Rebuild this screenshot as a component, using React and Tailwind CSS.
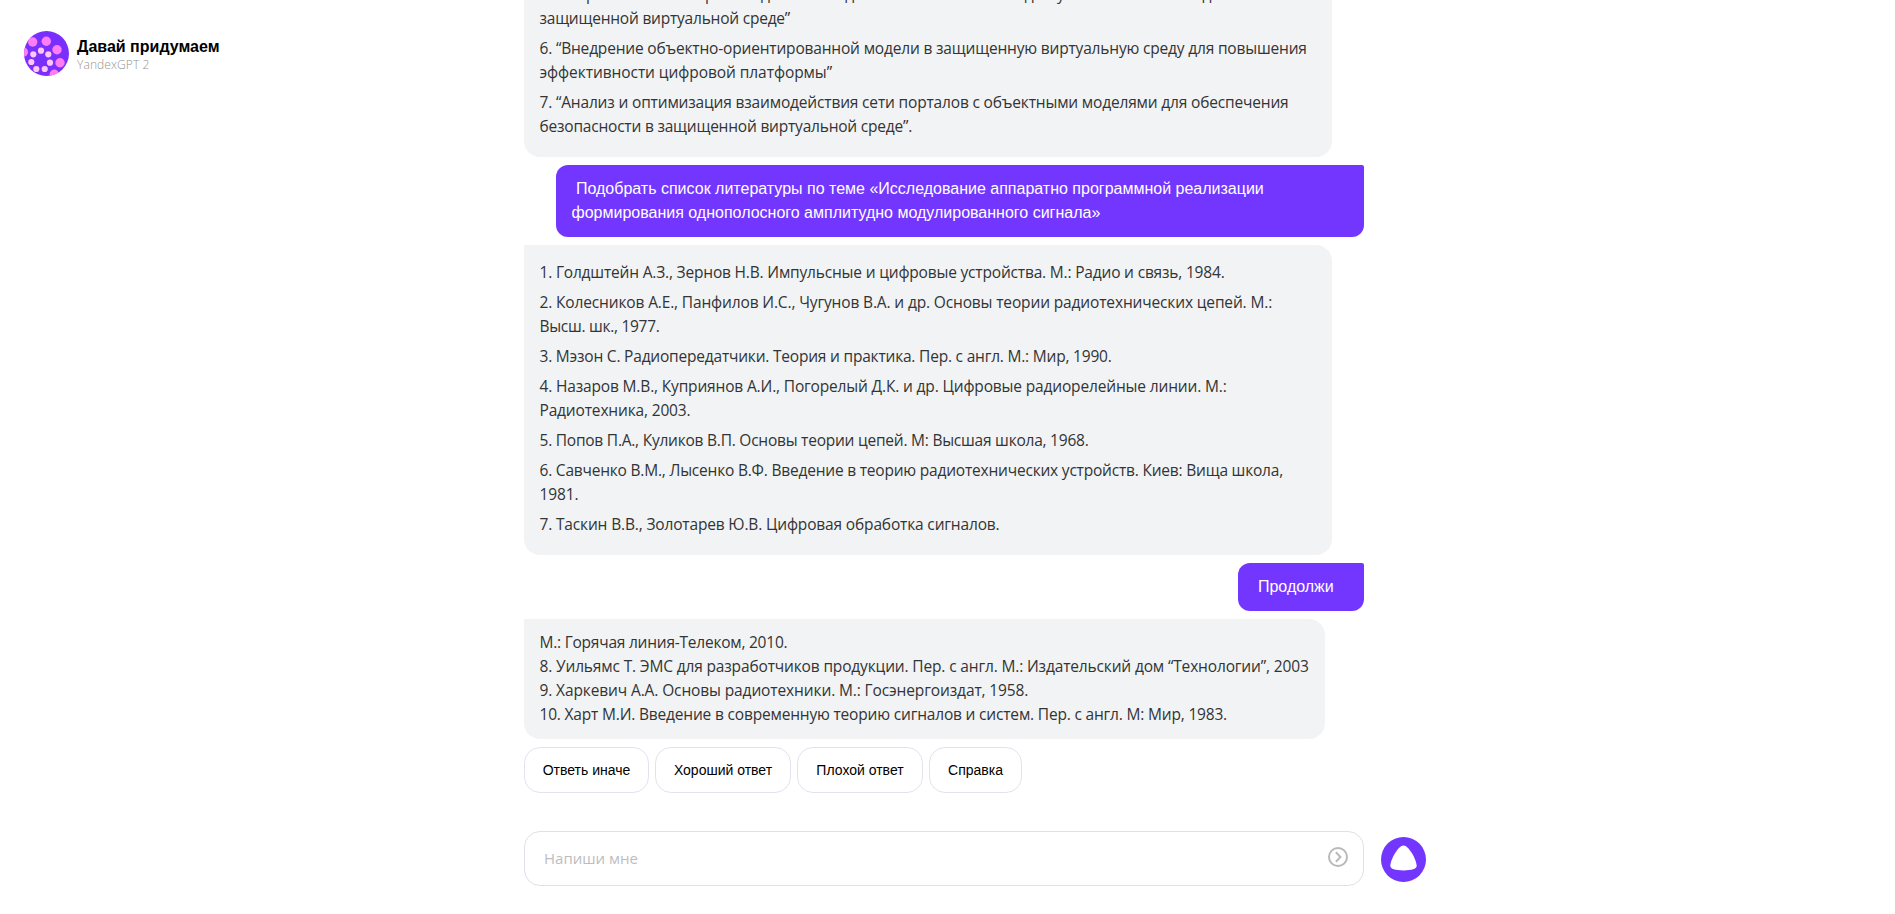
const BIG_DOTS = [
  [8.7, 11],
  [22.3, 10.3],
  [33, 18.7],
  [36, 31.7],
  [30.3, 43.3],
  [-0.6, 21],
];

const SMALL_DOTS = [
  [17, 19.7],
  [24.3, 23.3],
  [26, 31.7],
  [20.7, 38],
  [12.3, 38],
  [7.3, 31],
  [9.3, 23.3],
];

const TOPICS = [
  [
    ["5. “Разработка мониторинга адаптивной динамической системы доступа пользователей для сети в", "tracking-[-0.18px]"],
    ["защищенной виртуальной среде”", "tracking-[-0.22px]"],
  ],
  [
    ["6. “Внедрение объектно-ориентированной модели в защищенную виртуальную среду для повышения", "tracking-[-0.18px]"],
    ["эффективности цифровой платформы”", "tracking-[-0.07px]"],
  ],
  [
    ["7. “Анализ и оптимизация взаимодействия сети порталов с объектными моделями для обеспечения", "tracking-[-0.17px]"],
    ["безопасности в защищенной виртуальной среде”.", "tracking-[-0.21px]"],
  ],
];

const BOOKS = [
  [["1. Голдштейн А.З., Зернов Н.В. Импульсные и цифровые устройства. М.: Радио и связь, 1984.", "tracking-[-0.184px]"]],
  [
    ["2. Колесников А.Е., Панфилов И.С., Чугунов В.А. и др. Основы теории радиотехнических цепей. М.:", "tracking-[-0.145px]"],
    ["Высш. шк., 1977.", "tracking-[-0.29px]"],
  ],
  [["3. Мэзон С. Радиопередатчики. Теория и практика. Пер. с англ. М.: Мир, 1990.", "tracking-[-0.205px]"]],
  [
    ["4. Назаров М.В., Куприянов А.И., Погорелый Д.К. и др. Цифровые радиорелейные линии. М.:", "tracking-[-0.16px]"],
    ["Радиотехника, 2003.", "tracking-[-0.16px]"],
  ],
  [["5. Попов П.А., Куликов В.П. Основы теории цепей. М: Высшая школа, 1968.", "tracking-[-0.234px]"]],
  [
    ["6. Савченко В.М., Лысенко В.Ф. Введение в теорию радиотехнических устройств. Киев: Вища школа,", "tracking-[-0.205px]"],
    ["1981.", "tracking-[-0.1px]"],
  ],
  [["7. Таскин В.В., Золотарев Ю.В. Цифровая обработка сигналов.", "tracking-[-0.16px]"]],
];

const MORE_BOOKS = [
  [
    ["М.: Горячая линия-Телеком, 2010.", "tracking-[-0.23px]"],
    ["8. Уильямс Т. ЭМС для разработчиков продукции. Пер. с англ. М.: Издательский дом “Технологии”, 2003", "tracking-[-0.152px]"],
    ["9. Харкевич А.А. Основы радиотехники. М.: Госэнергоиздат, 1958.", "tracking-[-0.12px]"],
    ["10. Харт М.И. Введение в современную теорию сигналов и систем. Пер. с англ. М: Мир, 1983.", "tracking-[-0.184px]"],
  ],
];

const ACTIONS = [
  ["Ответь иначе", "w-[125px]"],
  ["Хороший ответ", "w-[136px]"],
  ["Плохой ответ", "w-[126px]"],
  ["Справка", "w-[93px]"],
];

function Avatar() {
  return (
    <svg className="size-[45px] shrink-0" viewBox="0 0 45 45">
      <defs>
        <clipPath id="avatar-clip">
          <circle cx="22.5" cy="22.5" r="22.5" />
        </clipPath>
      </defs>
      <g clipPath="url(#avatar-clip)">
        <rect width="45" height="45" fill="#7a30fc" />
        {BIG_DOTS.map(([x, y]) => (
          <circle key={`${x}-${y}`} cx={x} cy={y} r="4.7" fill="#ff7df4" />
        ))}
        {SMALL_DOTS.map(([x, y]) => (
          <circle key={`${x}-${y}`} cx={x} cy={y} r="3.1" fill="#ffc4f8" />
        ))}
      </g>
    </svg>
  );
}

function BotMessage({ items, className }) {
  return (
    <div
      className={`flex shrink-0 flex-col gap-1.5 rounded-2xl rounded-tl-none bg-[#f1f3f5] px-[15.5px] font-['Open_Sans',sans-serif] text-[15.5px] leading-6 text-[#333436] ${className}`}
    >
      {items.map((lines) => (
        <div key={lines[0][0]}>
          {lines.map(([text, tracking]) => (
            <p key={text} className={`whitespace-nowrap ${tracking}`}>
              {text}
            </p>
          ))}
        </div>
      ))}
    </div>
  );
}

function UserMessage({ children, className }) {
  return (
    <div
      className={`shrink-0 self-end whitespace-pre-wrap rounded-xl rounded-tr-[2px] bg-[#7336ff] px-[15.5px] py-3 text-base leading-6 text-white ${className}`}
    >
      {children}
    </div>
  );
}

export default function App() {
  return (
    <div className="flex h-[914px] w-full overflow-hidden bg-white font-['Liberation_Sans',Arial,sans-serif]">
      <header className="flex h-[107px] w-[524px] shrink-0 items-center gap-2 pl-6">
        <Avatar />
        <div className="flex flex-col pt-0.5">
          <h1 className="text-base leading-5 font-bold text-black">Давай придумаем</h1>
          <p className="font-['Open_Sans',sans-serif] text-xs leading-4 font-light tracking-[0.1px] text-[#949494]">
            YandexGPT 2
          </p>
        </div>
      </header>

      <main className="flex flex-col">
        <section className="flex h-[793px] w-[840px] shrink-0 flex-col justify-end gap-2 overflow-hidden">
          <BotMessage items={TOPICS} className="w-[808px] pt-[15px] pb-[19px]" />
          <UserMessage className="w-[808px]">
            {" Подобрать список литературы по теме «Исследование аппаратно программной реализации формирования однополосного амплитудно модулированного сигнала»"}
          </UserMessage>
          <BotMessage items={BOOKS} className="w-[808px] pt-[15px] pb-[19px]" />
          <UserMessage className="w-[126px]">{" Продолжи"}</UserMessage>
          <BotMessage items={MORE_BOOKS} className="w-[801px] pt-[11px] pb-[13px]" />
          <div className="flex shrink-0 gap-1.5">
            {ACTIONS.map(([label, width]) => (
              <button
                key={label}
                type="button"
                className={`h-[46px] rounded-2xl border border-[#e3e2ee] text-sm whitespace-nowrap text-black ${width}`}
              >
                {label}
              </button>
            ))}
          </div>
        </section>

        <footer className="mt-[38px] flex items-center">
          <div className="flex h-[55px] w-[840px] items-center justify-between rounded-2xl border border-[#e0e0e9] pr-[15px] pl-[19px]">
            <span className="font-['Open_Sans',sans-serif] text-[15px] text-[#bdbdc1]">Напиши мне</span>
            <button type="button" className="-mt-[3px]" aria-label="Отправить">
              <svg className="size-5" viewBox="0 0 20 20" fill="none" stroke="#b9b9b9" strokeWidth="2">
                <circle cx="10" cy="10" r="9" />
                <path d="M7.9 5.3 12.4 10 7.9 14.7" />
              </svg>
            </button>
          </div>
          <button type="button" className="mt-0.5 ml-[17px]" aria-label="Алиса">
            <svg className="size-[45px]" viewBox="0 0 44 44">
              <circle cx="22" cy="22" r="22" fill="#7336ff" />
              <path
                fill="#fff"
                d="M22 8.2c2.6 0 5.6 3.2 8.3 7.7 2.8 4.7 4.6 9.7 4.6 12.3 0 3.2-4.9 4.5-12.9 4.5s-12.9-1.3-12.9-4.5c0-2.6 1.8-7.6 4.6-12.3 2.7-4.5 5.7-7.7 8.3-7.7z"
              />
            </svg>
          </button>
        </footer>
      </main>
    </div>
  );
}
